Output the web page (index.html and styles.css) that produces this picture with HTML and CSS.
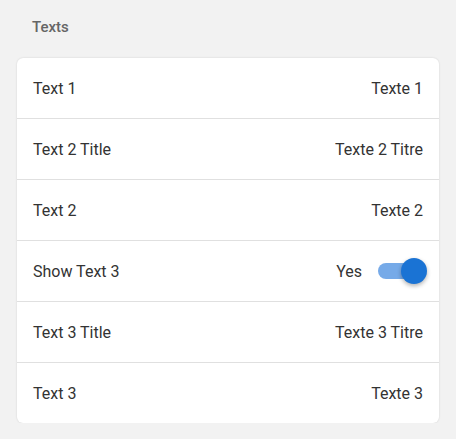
FILE: index.html
```html
<!DOCTYPE html>
<html>
<head>
<meta charset="utf-8">
<link rel="stylesheet" href="styles.css">
</head>
<body>
<div class="page">
  <div class="section-title">Texts</div>
  <div class="card">
    <div class="row"><span class="label">Text 1</span><span class="value">Texte 1</span></div>
    <div class="row"><span class="label">Text 2 Title</span><span class="value">Texte 2 Titre</span></div>
    <div class="row"><span class="label">Text 2</span><span class="value">Texte 2</span></div>
    <div class="row"><span class="label">Show Text 3</span>
      <span class="toggle-wrap"><span class="value">Yes</span><span class="switch"><span class="track"></span><span class="thumb"></span></span></span>
    </div>
    <div class="row"><span class="label">Text 3 Title</span><span class="value">Texte 3 Titre</span></div>
    <div class="row"><span class="label">Text 3</span><span class="value">Texte 3</span></div>
  </div>
</div>
</body>
</html>
```
FILE: styles.css
```css
html, body {
  margin: 0;
  padding: 0;
  background: #f2f2f2;
  font-family: Roboto, "Liberation Sans", sans-serif;
}
.page {
  padding: 0 17px 0 17px;
}
.section-title {
  height: 58px;
  box-sizing: border-box;
  padding: 17px 0 0 15px;
  font-size: 15px;
  font-weight: 500;
  color: #666;
  line-height: 20px;
}
.card {
  background: #fff;
  border-radius: 6px;
  box-shadow: 0 0 2px rgba(0,0,0,0.15);
  width: 422px;
}
.row {
  height: 60px;
  display: flex;
  align-items: center;
  justify-content: space-between;
  padding: 0 16px;
  border-bottom: 1px solid #e0e0e0;
  font-size: 16px;
  color: #333;
}
.row:last-child {
  border-bottom: none;
}
.value {
  color: #333;
}
.toggle-wrap {
  display: flex;
  align-items: center;
  gap: 16px;
}
.switch {
  position: relative;
  width: 49px;
  height: 26px;
  margin-right: -4px;
  display: block;
}
.track {
  position: absolute;
  left: 0;
  top: 5px;
  width: 42px;
  height: 16px;
  border-radius: 8px;
  background: #76aae8;
}
.thumb {
  position: absolute;
  right: 0;
  top: 0;
  width: 26px;
  height: 26px;
  border-radius: 50%;
  background: #1a73d4;
  box-shadow: 0 2px 4px rgba(0,0,0,0.3);
}
```
